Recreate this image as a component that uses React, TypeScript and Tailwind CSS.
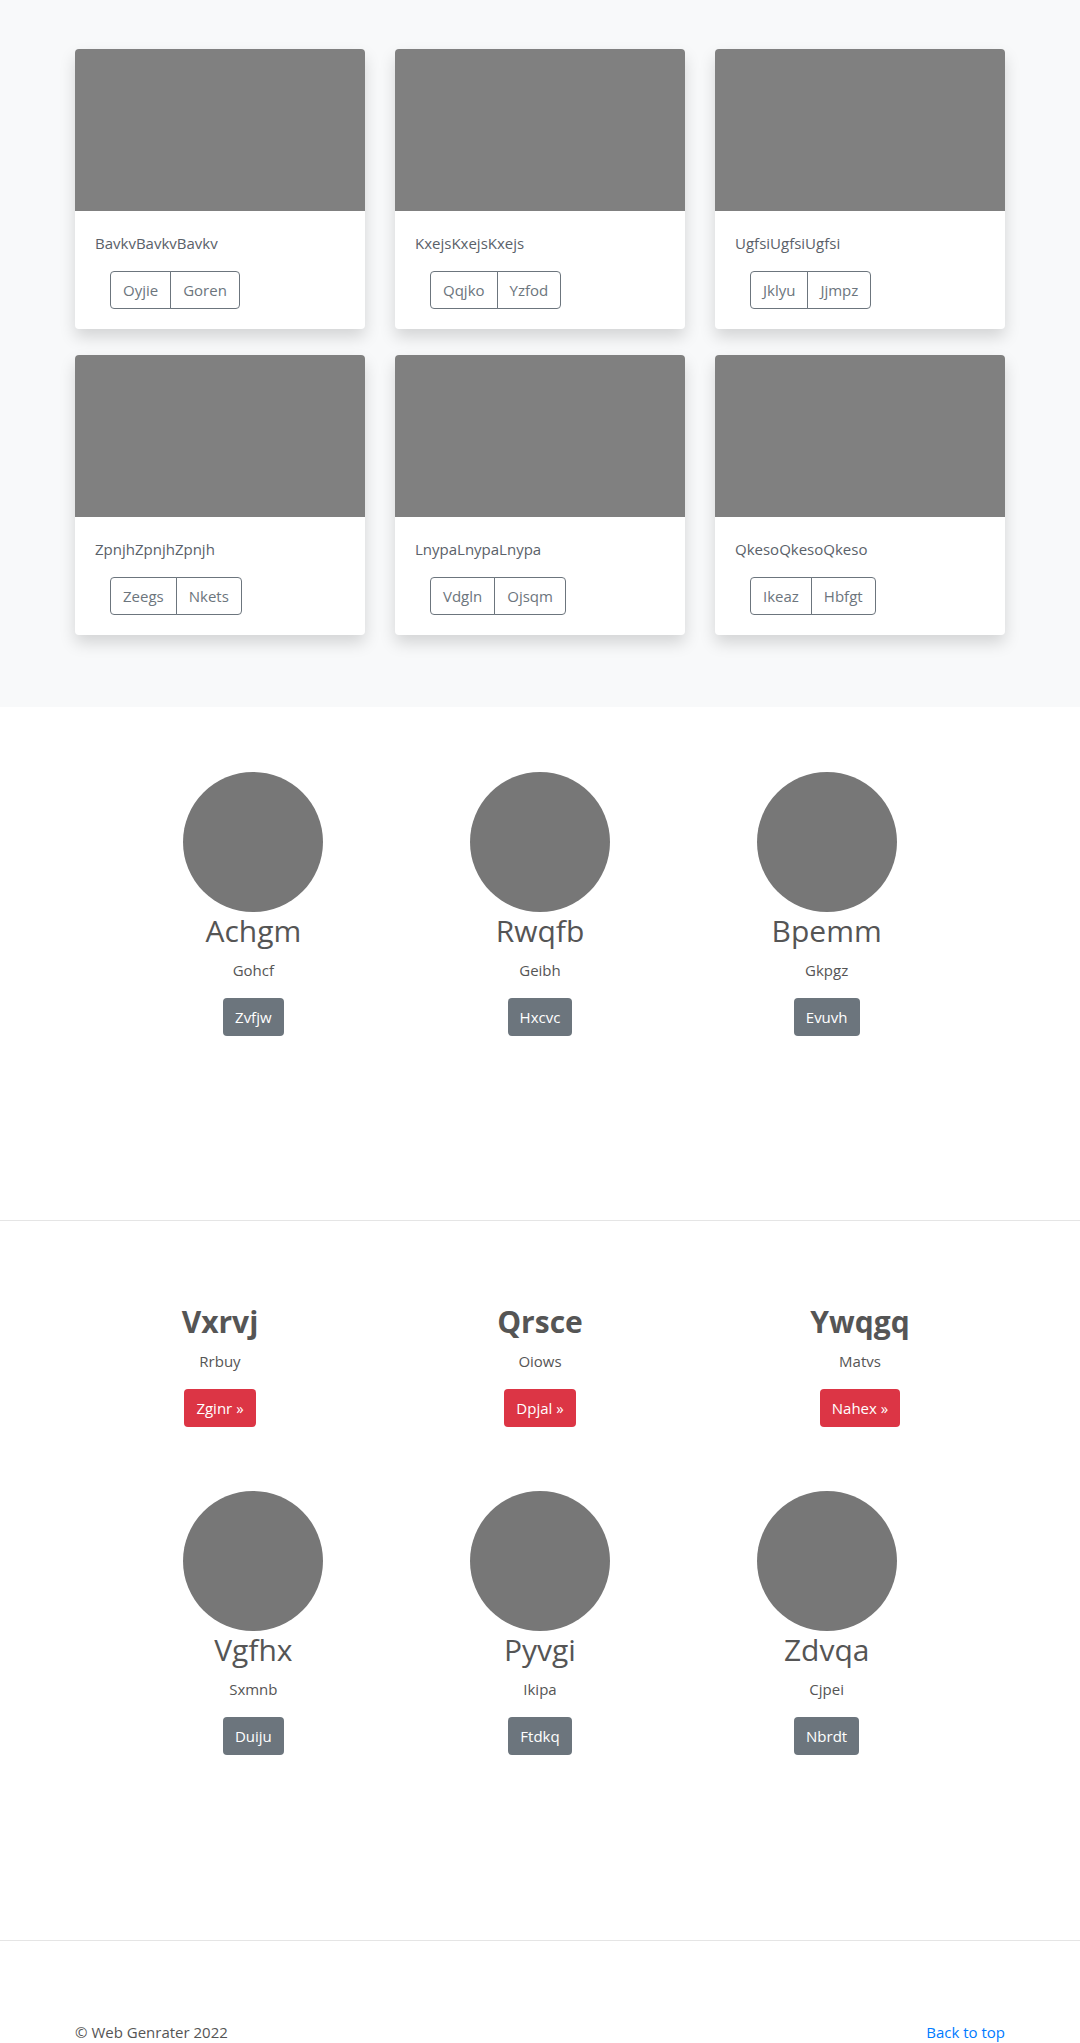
const cards = [
  { title: "BavkvBavkvBavkv", a: "Oyjie", b: "Goren" },
  { title: "KxejsKxejsKxejs", a: "Qqjko", b: "Yzfod" },
  { title: "UgfsiUgfsiUgfsi", a: "Jklyu", b: "Jjmpz" },
  { title: "ZpnjhZpnjhZpnjh", a: "Zeegs", b: "Nkets" },
  { title: "LnypaLnypaLnypa", a: "Vdgln", b: "Ojsqm" },
  { title: "QkesoQkesoQkeso", a: "Ikeaz", b: "Hbfgt" },
];

const people = [
  { name: "Achgm", sub: "Gohcf", btn: "Zvfjw" },
  { name: "Rwqfb", sub: "Geibh", btn: "Hxcvc" },
  { name: "Bpemm", sub: "Gkpgz", btn: "Evuvh" },
];

const features = [
  { name: "Vxrvj", sub: "Rrbuy", btn: "Zginr" },
  { name: "Qrsce", sub: "Oiows", btn: "Dpjal" },
  { name: "Ywqgq", sub: "Matvs", btn: "Nahex" },
];

const people2 = [
  { name: "Vgfhx", sub: "Sxmnb", btn: "Duiju" },
  { name: "Pyvgi", sub: "Ikipa", btn: "Ftdkq" },
  { name: "Zdvqa", sub: "Cjpei", btn: "Nbrdt" },
];

const Person = ({ name, sub, btn }: { name: string; sub: string; btn: string }) => (
  <div className="flex flex-col items-center">
    <div className="w-[140px] h-[140px] rounded-full bg-[#777]" />
    <h2 className="text-[30px] leading-[38px] font-normal">{name}</h2>
    <p className="mt-[8px] text-[15px] leading-[24px]">{sub}</p>
    <button className="mt-[16px] h-[38px] px-[12px] rounded-[4px] bg-[#6c757d] text-white text-[15px] leading-[24px]">
      {btn}
    </button>
  </div>
);

export default function App() {
  return (
    <div className="text-[#555] font-['Open_Sans','Noto_Sans',sans-serif]">
      {/* album cards */}
      <section className="bg-[#f8f9fa] pt-[49px] pb-[72px]">
        <div className="w-[960px] mx-auto px-[15px] grid grid-cols-3 gap-x-[30px] gap-y-[26px]">
          {cards.map((c) => (
            <div key={c.title} className="bg-white rounded-[4px] overflow-hidden shadow-[0_8px_16px_rgba(0,0,0,0.15)]">
              <div className="h-[162px] bg-[#808080]" />
              <div className="p-[20px]">
                <p className="text-[15px] leading-[24px] text-[#5a6169]">{c.title}</p>
                <div className="mt-[16px] ml-[15px] flex">
                  <button className="h-[38px] px-[12px] border border-[#6c757d] rounded-l-[4px] text-[#6c757d] text-[15px] leading-[24px]">
                    {c.a}
                  </button>
                  <button className="h-[38px] px-[12px] -ml-px border border-[#6c757d] rounded-r-[4px] text-[#6c757d] text-[15px] leading-[24px]">
                    {c.b}
                  </button>
                </div>
              </div>
            </div>
          ))}
        </div>
      </section>

      {/* circles */}
      <section className="pt-[65px] pb-[184px]">
        <div className="w-[860px] mx-auto grid grid-cols-3">
          {people.map((p) => (
            <Person key={p.name} {...p} />
          ))}
        </div>
      </section>

      <hr className="border-0 border-t border-[#e5e5e5]" />

      {/* features */}
      <section className="pt-[82px] pb-[185px]">
        <div className="w-[960px] mx-auto grid grid-cols-3">
          {features.map((f) => (
            <div key={f.name} className="flex flex-col items-center">
              <h2 className="text-[30px] leading-[38px] font-bold">{f.name}</h2>
              <p className="mt-[8px] text-[15px] leading-[24px]">{f.sub}</p>
              <button className="mt-[16px] h-[38px] px-[12px] rounded-[4px] bg-[#dc3545] text-white text-[15px] leading-[24px]">
                {f.btn} »
              </button>
            </div>
          ))}
        </div>
        <div className="mt-[64px] w-[860px] mx-auto grid grid-cols-3">
          {people2.map((p) => (
            <Person key={p.name} {...p} />
          ))}
        </div>
      </section>

      <hr className="border-0 border-t border-[#e5e5e5]" />

      <footer className="pt-[79px]">
        <div className="w-[960px] mx-auto px-[15px] flex justify-between text-[15px] leading-[24px]">
          <p>© Web Genrater 2022</p>
          <a href="#" className="text-[#007bff]">Back to top</a>
        </div>
      </footer>
    </div>
  );
}
